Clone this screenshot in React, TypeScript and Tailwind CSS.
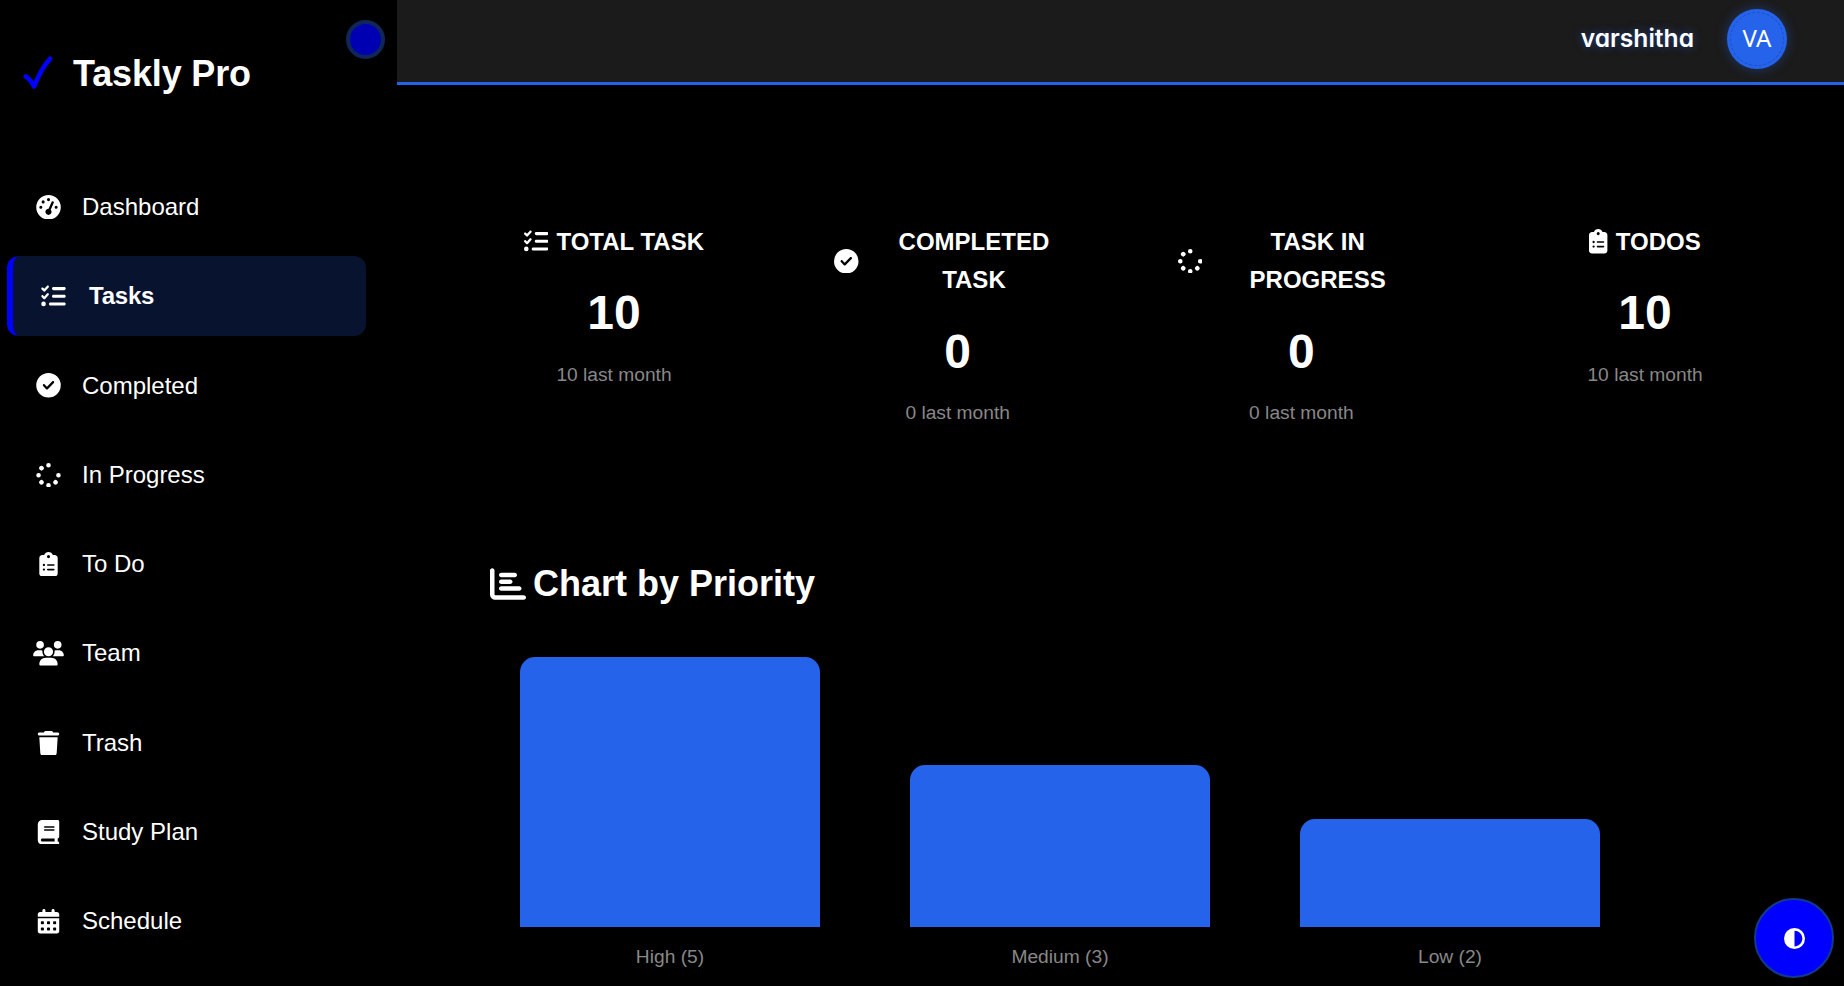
import type { IconType } from "react-icons";
import {
  FaBook,
  FaCalendarDays,
  FaChartBar,
  FaCircleCheck,
  FaCircleHalfStroke,
  FaClipboardList,
  FaGaugeHigh,
  FaListCheck,
  FaSpinner,
  FaTrash,
  FaUsers,
} from "react-icons/fa6";

const navItems: { label: string; icon: IconType; active?: boolean }[] = [
  { label: "Dashboard", icon: FaGaugeHigh },
  { label: "Tasks", icon: FaListCheck, active: true },
  { label: "Completed", icon: FaCircleCheck },
  { label: "In Progress", icon: FaSpinner },
  { label: "To Do", icon: FaClipboardList },
  { label: "Team", icon: FaUsers },
  { label: "Trash", icon: FaTrash },
  { label: "Study Plan", icon: FaBook },
  { label: "Schedule", icon: FaCalendarDays },
];

const stats: { title: string; icon: IconType; value: number; narrowIcon?: boolean }[] = [
  { title: "TOTAL TASK", icon: FaListCheck, value: 10 },
  { title: "COMPLETED TASK", icon: FaCircleCheck, value: 0 },
  { title: "TASK IN PROGRESS", icon: FaSpinner, value: 0 },
  { title: "TODOS", icon: FaClipboardList, value: 10, narrowIcon: true },
];

const priorities = [
  { name: "High", count: 5 },
  { name: "Medium", count: 3 },
  { name: "Low", count: 2 },
];

function Sidebar() {
  return (
    <aside className="relative flex h-full w-[397px] shrink-0 flex-col bg-black">
      <div className="flex h-[146px] items-center pl-[23px]">
        <svg viewBox="0 0 30 34" className="h-[34px] w-[30px]" fill="none">
          <path
            d="M2.8 20.4C6 22.4 8.6 26 11.1 30.4C14.8 21 20.2 10.4 27 2.7"
            stroke="#0000ff"
            strokeWidth="4.6"
            strokeLinecap="round"
            strokeLinejoin="round"
          />
        </svg>
        <h1 className="pl-5 pt-[2px] text-[36px] font-bold leading-none tracking-[-0.15px]">Taskly Pro</h1>
      </div>
      <button
        aria-label="Toggle sidebar"
        className="absolute left-[346px] top-[20px] size-[39px] rounded-full border-4 border-[#0f2657] bg-[#0000b3]"
      />
      <nav className="mt-[21px] flex flex-col gap-[9.3px] pl-[7px]">
        {navItems.map(({ label, icon: Icon, active }) => (
          <a
            key={label}
            className={
              active
                ? "flex h-20 w-[359px] items-center rounded-xl border-l-[6px] border-[#0000ff] bg-[#081330] pl-[25px] text-[24px] font-bold"
                : "flex h-20 w-[359px] items-center pl-[26px] text-[24px]"
            }
          >
            <span className="flex w-[31px] justify-center">
              <Icon className="h-[24.5px] w-[31px] shrink-0" />
            </span>
            <span className={active ? "pl-5 tracking-[-0.2px]" : "pl-[18px]"}>{label}</span>
          </a>
        ))}
      </nav>
    </aside>
  );
}

function Header() {
  return (
    <header className="flex h-[85px] shrink-0 items-start justify-end border-b-[3px] border-[#2563eb] bg-[#1b1b1b] pr-[57px] pt-[9px]">
      <span className="pr-[33px] pt-[10px] font-[Inter,sans-serif] text-[24.6px] font-semibold leading-[38px] [font-feature-settings:'cv11'] [text-shadow:0_0_8px_rgba(37,99,235,0.5)]">
        varshitha
      </span>
      <div className="flex size-[60px] items-center justify-center rounded-full bg-[#2563eb] p-[3px] shadow-[0_0_12px_rgba(37,99,235,0.4)]">
        <div className="flex size-full items-center justify-center rounded-full border border-dashed border-[#1d4fc0] pb-[2px] font-['Noto_Sans',sans-serif] text-[24px] leading-none">
          VA
        </div>
      </div>
    </header>
  );
}

function Stats() {
  return (
    <section className="grid grid-cols-[repeat(4,247px)] gap-[96.7px] pl-[93.5px] pt-[137.5px]">
      {stats.map(({ title, icon: Icon, value, narrowIcon }) => (
        <div key={title} className="flex flex-col items-center text-center">
          <h3 className="flex items-center justify-center gap-[8px] text-[24px] font-bold leading-[38.4px]">
            <Icon className={narrowIcon ? "h-[24.5px] w-[18.4px] shrink-0" : "size-[24.5px] shrink-0"} />
            <span>{title}</span>
          </h3>
          <p className="mt-[14.3px] text-[48px] font-bold leading-[76px]">{value}</p>
          <p className="mt-[7.7px] text-[19.2px] leading-[31px] text-[#888888]">{value} last month</p>
        </div>
      ))}
    </section>
  );
}

function PriorityChart() {
  return (
    <section className="pt-[127px]">
      <h2 className="flex items-center gap-[7px] pl-[93px] text-[36px] font-bold leading-[58px]">
        <FaChartBar className="size-[36px]" />
        Chart by Priority
      </h2>
      <div className="flex h-[359px] items-end gap-[90px] pl-[123px]">
        {priorities.map(({ name, count }) => (
          <div key={name} className="flex w-[300px] flex-col items-center">
            <div className="w-full rounded-t-[15px] bg-[#2563eb]" style={{ height: count * 54 }} />
            <p className="mt-[14px] h-[31px] text-[19.2px] leading-[31px] text-[#888888]">
              {name} ({count})
            </p>
          </div>
        ))}
      </div>
    </section>
  );
}

export default function App() {
  return (
    <div className="flex h-[986px] w-[1844px] overflow-hidden bg-black font-['Liberation_Sans',Arial,sans-serif] text-white">
      <Sidebar />
      <main className="flex min-w-0 flex-1 flex-col">
        <Header />
        <Stats />
        <PriorityChart />
      </main>
      <button
        aria-label="Toggle theme"
        className="absolute left-[1754.4px] top-[898px] flex size-[80px] items-center justify-center rounded-full border-2 border-[#123a8c] bg-[#0000ff]"
      >
        <FaCircleHalfStroke className="size-[21px]" />
      </button>
    </div>
  );
}
